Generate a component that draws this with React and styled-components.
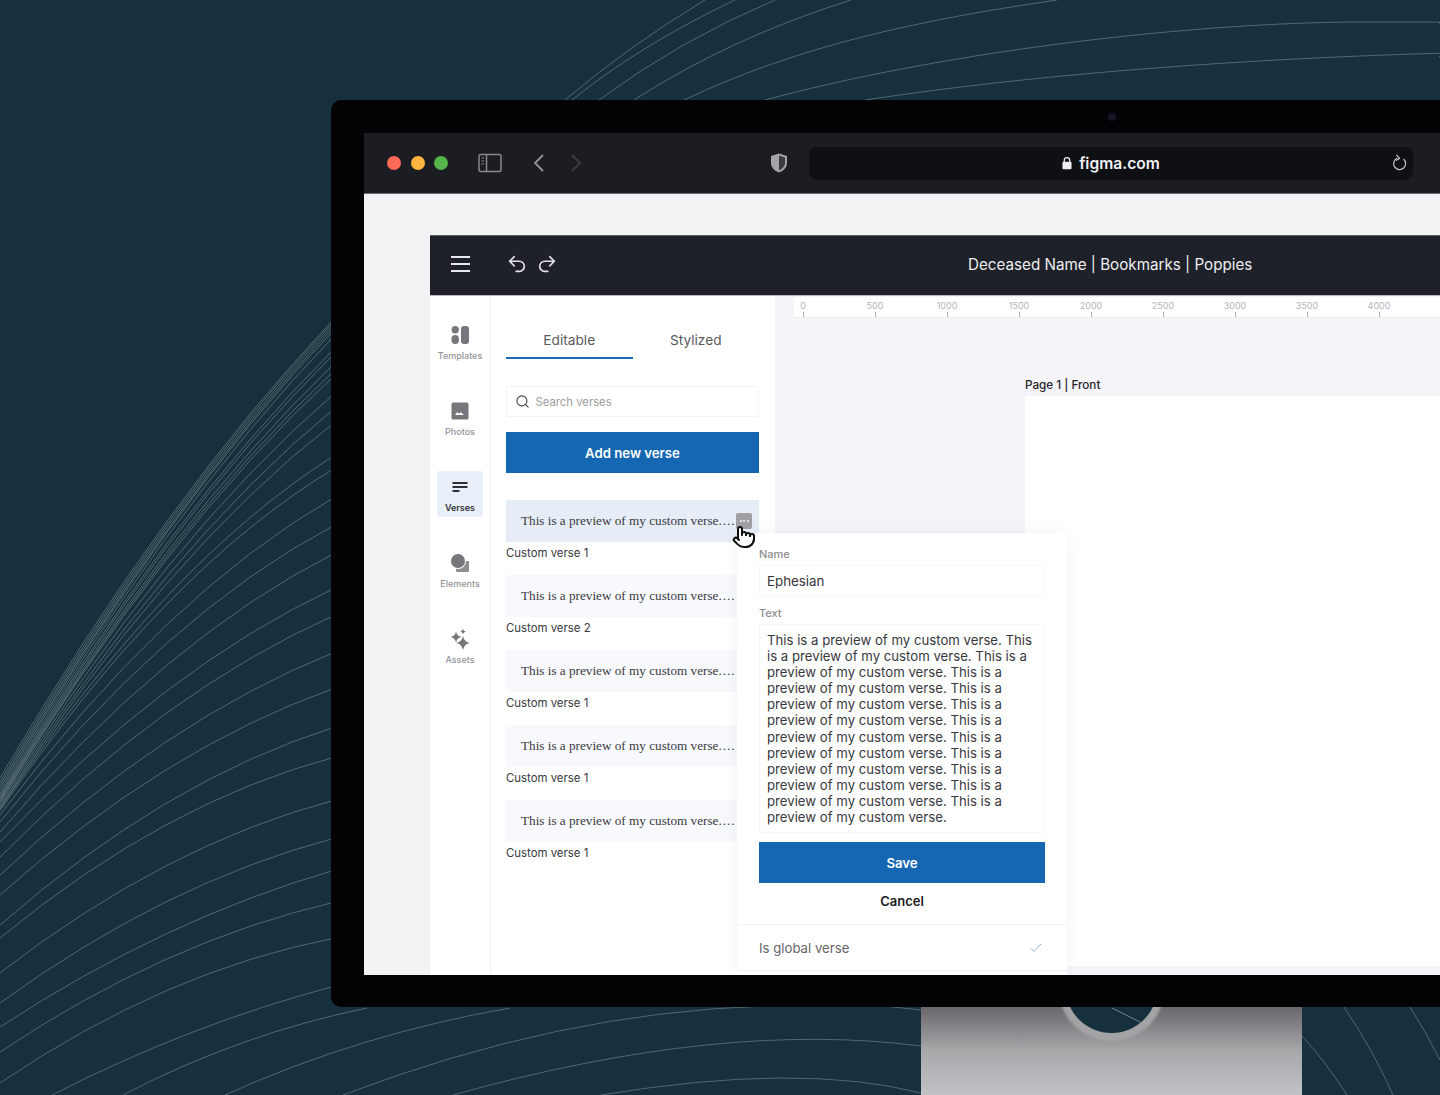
import React from "react";
import styled, { createGlobalStyle } from "styled-components";
import { Search, Undo2, Redo2 } from "lucide-react";

const Global = createGlobalStyle`
  html, body { margin: 0; padding: 0; background: #16303d; }
  * { box-sizing: border-box; }
  body { font-family: Inter, "Liberation Sans", sans-serif; }
`;

const Page = styled.div`
  position: relative;
  width: 1440px;
  height: 1095px;
  overflow: hidden;
  background: #16303d;
  padding: 100px 0 0 331px;
  display: flex;
  flex-direction: column;
`;
const Backdrop = styled.svg`
  position: absolute;
  inset: 0;
  width: 1440px;
  height: 1095px;
`;
const Monitor = styled.div`
  position: relative;
  height: 907px;
  flex: none;
  background: #030205;
  border-radius: 10px 0 0 10px;
  padding: 0 0 32px 33px;
  display: flex;
  flex-direction: column;
`;
const Bezel = styled.div`
  height: 33px;
  flex: none;
  display: flex;
  align-items: center;
  padding-left: 744px;
`;
const Camera = styled.span`
  width: 8px;
  height: 8px;
  border-radius: 50%;
  background: #14142a;
`;
const Screen = styled.div`
  flex: 1;
  display: flex;
  flex-direction: column;
  background: #f3f2f5;
  overflow: hidden;
`;
const BrowserBar = styled.div`
  height: 61px;
  flex: none;
  background: #1c1d22;
  display: flex;
  align-items: center;
  padding-left: 23px;
  border-bottom: 1px solid #6d6d72;
`;
const Lights = styled.div`
  display: flex;
  gap: 9.5px;
`;
const Light = styled.span`
  width: 14px;
  height: 14px;
  border-radius: 50%;
  background: ${(p) => p.$c};
`;
const BarIcon = styled.svg`
  flex: none;
  margin-left: ${(p) => p.$ml}px;
`;
const UrlBar = styled.div`
  margin-left: 21px;
  width: 604px;
  height: 33px;
  flex: none;
  background: #0f1014;
  border-radius: 8px;
  display: grid;
  grid-template-columns: 1fr auto 1fr;
  align-items: center;
`;
const UrlCenter = styled.div`
  grid-column: 2;
  display: flex;
  align-items: center;
  gap: 7px;
  color: #f2f2f4;
  font-size: 15.6px;
  font-weight: 600;
`;
const Reload = styled.svg`
  justify-self: end;
  margin-right: 6px;
`;
const Workspace = styled.div`
  flex: 1;
  min-height: 0;
  padding: 41px 0 0 66px;
  display: flex;
`;
const AppFrame = styled.div`
  position: relative;
  flex: 1;
  display: flex;
  flex-direction: column;
  min-width: 0;
`;
const AppHeader = styled.header`
  height: 61px;
  flex: none;
  background: #1e2129;
  border-top: 1px solid #5c5e63;
  border-bottom: 1px solid #b9b9bd;
  padding-bottom: 3px;
  display: flex;
  align-items: center;
  color: #eeeef0;
`;
const Burger = styled.div`
  width: 19px;
  margin-left: 21px;
  display: flex;
  flex-direction: column;
  gap: 5px;
`;
const BurgerBar = styled.span`
  height: 2px;
  background: #e9e9eb;
`;
const HistoryButtons = styled.div`
  margin-left: 36px;
  display: flex;
  gap: 8px;
  color: #e4e4e6;
`;
const Title = styled.div`
  margin-left: 410px;
  font-size: 15.2px;
  white-space: nowrap;
`;
const AppBody = styled.div`
  flex: 1;
  min-height: 0;
  display: flex;
  background: #fff;
`;
const Sidebar = styled.nav`
  width: 61px;
  flex: none;
  background: #fff;
  border-right: 1px solid #f1f1f4;
  padding: 23px 0 0 7px;
  display: flex;
  flex-direction: column;
  gap: 30px;
`;
const SideItem = styled.div`
  width: 46px;
  height: 46px;
  flex: none;
  padding-top: 7px;
  display: flex;
  flex-direction: column;
  align-items: center;
  gap: 6px;
  border-radius: 2px;
  background: ${(p) => (p.$active ? "#e9eff8" : "transparent")};
`;
const SideLabel = styled.span`
  font-size: 9px;
  line-height: 12px;
  white-space: nowrap;
  font-weight: ${(p) => (p.$active ? 600 : 500)};
  color: ${(p) => (p.$active ? "#333338" : "#939397")};
`;
const Panel = styled.section`
  width: 284px;
  flex: none;
  background: #fff;
  padding: 23px 16px 0 15px;
  display: flex;
  flex-direction: column;
`;
const Tabs = styled.div`
  display: flex;
  height: 40px;
  flex: none;
`;
const Tab = styled.div`
  width: 126.5px;
  height: 40px;
  display: flex;
  align-items: center;
  justify-content: center;
  padding-top: 4px;
  font-size: 13.7px;
  color: #5b5b60;
  border-bottom: 2px solid ${(p) => (p.$active ? "#1d69b3" : "transparent")};
`;
const SearchBox = styled.div`
  margin-top: 27px;
  height: 31px;
  flex: none;
  border: 1px solid #f4f4f7;
  border-radius: 2px;
  display: flex;
  align-items: center;
  gap: 6px;
  padding-left: 7.5px;
  color: #46464b;
  font-size: 11.3px;
`;
const Placeholder = styled.span`
  color: #9c9ca1;
`;
const PrimaryButton = styled.div`
  height: 41px;
  flex: none;
  background: #1567b1;
  color: #fff;
  display: flex;
  align-items: center;
  justify-content: center;
  font-size: 13.2px;
  font-weight: 600;
`;
const AddButton = styled(PrimaryButton)`
  margin-top: 15px;
`;
const VerseList = styled.div`
  margin-top: 27px;
  display: flex;
  flex-direction: column;
`;
const VerseGroup = styled.div`
  height: 75px;
  flex: none;
`;
const VerseCard = styled.div`
  position: relative;
  height: 42px;
  background: ${(p) => (p.$active ? "#e6edf7" : "#f8f9fc")};
  padding-left: 15px;
  display: flex;
  align-items: center;
`;
const VerseText = styled.span`
  font-family: "Liberation Serif", "Times New Roman", serif;
  font-size: 13.2px;
  color: #3a3a3f;
  white-space: nowrap;
`;
const VerseDots = styled.span`
  letter-spacing: 1px;
`;
const VerseName = styled.div`
  margin-top: 3.5px;
  font-size: 11.4px;
  line-height: 15px;
  color: #38383d;
`;
const MoreButton = styled.span`
  position: absolute;
  left: 230px;
  top: 13px;
  width: 16px;
  height: 16px;
  border-radius: 2px;
  background: #a1a1a5;
  color: #f2f2f2;
  display: flex;
  align-items: center;
  justify-content: center;
  gap: 1.5px;
`;
const MoreDot = styled.i`
  width: 2px;
  height: 2px;
  background: #f2f2f2;
  border-radius: 50%;
`;
const HandCursor = styled.svg`
  position: absolute;
  left: 226px;
  top: 25px;
  z-index: 3;
`;
const Canvas = styled.main`
  flex: 1;
  min-width: 0;
  background: #f4f4f9;
  display: flex;
  flex-direction: column;
  overflow: hidden;
`;
const Ruler = styled.div`
  margin: 1px 0 0 19px;
  height: 21px;
  flex: none;
  background: #fff;
  border-bottom: 1px solid #e9e9ee;
  overflow: hidden;
  display: flex;
`;
const RulerInner = styled.div`
  margin-left: -27px;
  display: flex;
  flex: none;
`;
const RulerCell = styled.div`
  width: 72px;
  flex: none;
  display: flex;
  flex-direction: column;
  align-items: center;
  font-size: 9px;
  line-height: 13px;
  color: #b2b2b6;
  padding-top: 2px;
`;
const RulerTick = styled.span`
  width: 1px;
  height: 5px;
  background: #a9a9ae;
`;
const PageLabel = styled.div`
  margin: 60px 0 0 250px;
  height: 14px;
  line-height: 14px;
  font-size: 11.7px;
  font-weight: 500;
  color: #26262a;
  white-space: nowrap;
`;
const PageSheet = styled.div`
  margin: 4px 0 9px 250px;
  flex: 1;
  background: #fff;
`;
const Popover = styled.aside`
  position: absolute;
  left: 307px;
  top: 298px;
  bottom: 0;
  width: 330px;
  z-index: 2;
  background: #fff;
  box-shadow: 0 0 18px rgba(40, 40, 90, 0.05);
  display: flex;
  flex-direction: column;
`;
const PopoverForm = styled.div`
  padding: 14px 22px 0 22px;
  display: flex;
  flex-direction: column;
`;
const FieldLabel = styled.label`
  font-size: 11px;
  line-height: 14px;
  font-weight: 500;
  color: #8c8c91;
`;
const NameInput = styled.div`
  margin-top: 4px;
  height: 31px;
  border: 1px solid #f6f6f8;
  border-radius: 2px;
  padding-left: 7px;
  display: flex;
  align-items: center;
  font-size: 13.3px;
  color: #333338;
`;
const TextLabel = styled(FieldLabel)`
  margin-top: 10px;
`;
const TextField = styled.div`
  margin-top: 4px;
  height: 209px;
  border: 1px solid #f6f6f8;
  border-radius: 2px;
  padding: 7px 7px 0 7px;
  font-size: 13.2px;
  line-height: 16.1px;
  color: #38383d;
`;
const SaveButton = styled(PrimaryButton)`
  margin-top: 9px;
`;
const CancelLine = styled.div`
  height: 36px;
  display: flex;
  align-items: center;
  justify-content: center;
  font-size: 13px;
  font-weight: 600;
  color: #1c1c20;
`;
const GlobalRow = styled.div`
  margin-top: 5px;
  height: 47px;
  border-top: 1px solid #f4f4f7;
  border-bottom: 1px solid #f4f4f7;
  padding: 0 25px 0 22px;
  display: flex;
  align-items: center;
  justify-content: space-between;
  font-size: 13.2px;
  color: #66666b;
`;
const Stand = styled.div`
  position: relative;
  margin-left: 590px;
  width: 381px;
  height: 88px;
  flex: none;
  overflow: hidden;
  background: linear-gradient(#69676b, #a8a7aa 50%, #c2c1c6 100%);
`;
const StandSvg = styled.svg`
  position: absolute;
  inset: 0;
`;

const fan = [
  [778, 323, 27], [782, 325, 27], [785, 328, 27], [788, 331, 27], [791, 334, 28], [794, 340, 28],
  [796, 353, 29], [798, 358, 29], [799, 368, 29], [801, 375, 30], [802, 380, 30],
  [804, 398, 31], [806, 413, 31], [808, 427, 32], [809, 460, 36], [811, 473, 36],
  [815, 502, 32], [822, 530, 31], [832, 558, 28], [842, 593, 25], [857, 620, 24],
  [875, 657, 23], [895, 693, 23], [925, 732, 24], [938, 762, 24], [973, 805, 22],
  [1003, 843, 20], [1027, 875, 16], [1052, 907, 19], [1083, 943, 21],
];
const extraPaths = [
  "M52 1095Q191 1024 335 986",
  "M123 1095Q240 1034 367 1008",
  "M225 1095Q360 1034 510 1008",
  "M343 1095Q560 1012 767 1006Q850 1000 921 1010",
  "M453 1095Q720 1020 921 1046",
  "M601 1095Q800 1062 921 1093",
  "M1302 1036Q1326 1062 1347 1095",
  "M1344 1007Q1372 1048 1393 1095",
  "M1410 1007Q1426 1032 1440 1060",
  "M565 100Q630 45 705 0",
  "M572 100Q640 45 735 0",
  "M599 100Q680 40 775 0",
  "M634 100Q730 38 851 0",
  "M684 100C800 45 920 20 1057 0",
  "M765 100C950 50 1200 22 1363 22S1430 23 1440 23",
  "M865 100C1050 72 1250 60 1386 55S1430 56 1440 57",
];

const CURVES = fan.map(([a, b, bulge]) => `M0 ${a}Q165 ${(a + b) / 2 - 2 * bulge} 335 ${b - 5}`);

const sideIconColor = "#77777b";

const TemplatesIcon = () => (
  <svg width="18" height="18" viewBox="0 0 18 18" fill={sideIconColor}>
    <circle cx="4.2" cy="3.8" r="3.7" />
    <rect x="0.5" y="9" width="7.4" height="9" rx="3.7" />
    <rect x="10" y="0" width="8" height="18" rx="3" />
  </svg>
);
const PhotosIcon = () => (
  <svg width="18" height="18" viewBox="0 0 18 18">
    <rect x="0.5" y="0.5" width="17" height="17" rx="1.5" fill={sideIconColor} />
    <path d="M4 13l2.4-3 1.8 2 1.4-2 3.4 3z" fill="#fff" />
  </svg>
);
const VersesIcon = () => (
  <svg width="18" height="18" viewBox="0 0 18 18" fill="#2d2d33">
    <rect x="1.5" y="4" width="15" height="2" />
    <rect x="1.5" y="8" width="15" height="2" />
    <rect x="1.5" y="12" width="7" height="2" />
  </svg>
);
const ElementsIcon = () => (
  <svg width="20" height="18" viewBox="0 0 20 18">
    <rect x="6" y="7" width="13" height="11" rx="1" fill="#8e8e92" />
    <circle cx="8" cy="7" r="8" fill="#fff" />
    <circle cx="8" cy="7" r="7" fill={sideIconColor} />
  </svg>
);
const star = (cx, cy, r) => {
  const k = r * 0.16;
  return `M${cx} ${cy - r}Q${cx + k} ${cy - k} ${cx + r} ${cy}Q${cx + k} ${cy + k} ${cx} ${cy + r}Q${cx - k} ${cy + k} ${cx - r} ${cy}Q${cx - k} ${cy - k} ${cx} ${cy - r}z`;
};
const AssetsIcon = () => (
  <svg width="20" height="18" viewBox="0 0 20 18" fill={sideIconColor} overflow="visible">
    <path d={star(13, 13, 7)} />
    <path d={star(6, 7, 5.5)} />
    <path d={star(13, 1.5, 2.8)} />
  </svg>
);

const sideItems = [
  { label: "Templates", Icon: TemplatesIcon },
  { label: "Photos", Icon: PhotosIcon },
  { label: "Verses", Icon: VersesIcon, active: true },
  { label: "Elements", Icon: ElementsIcon },
  { label: "Assets", Icon: AssetsIcon },
];
const verses = ["Custom verse 1", "Custom verse 2", "Custom verse 1", "Custom verse 1", "Custom verse 1"];
const rulerMarks = [0, 500, 1000, 1500, 2000, 2500, 3000, 3500, 4000];
const verseBody =
  "This is a preview of my custom verse. ".repeat(11) + "This is a preview of my custom verse.";

export default function App() {
  return (
    <Page>
      <Global />
      <Backdrop viewBox="0 0 1440 1095" fill="none" stroke="#b4c4c4" strokeOpacity="0.5" strokeWidth="0.75">
        {CURVES.map((d, i) => (
          <path key={i} d={d} />
        ))}
        {extraPaths.map((d) => (
          <path key={d} d={d} />
        ))}
      </Backdrop>
      <Monitor>
        <Bezel>
          <Camera />
        </Bezel>
        <Screen>
          <BrowserBar>
            <Lights>
              <Light $c="#ff6a56" />
              <Light $c="#ffb440" />
              <Light $c="#56b54a" />
            </Lights>
            <BarIcon $ml={30} width="24" height="20" viewBox="0 0 24 20" fill="none" stroke="#88888c" strokeWidth="1.5">
              <rect x="1" y="1.5" width="22" height="17" rx="2" />
              <path d="M8.5 1.5v17" />
              <path d="M3.5 5h2.5M3.5 8h2.5M3.5 11h2.5" strokeWidth="1" />
            </BarIcon>
            <BarIcon $ml={31} width="12" height="20" viewBox="0 0 12 20" fill="none" stroke="#96969a" strokeWidth="1.8">
              <path d="M10 2 2 10l8 8" />
            </BarIcon>
            <BarIcon $ml={25} width="12" height="20" viewBox="0 0 12 20" fill="none" stroke="#3d3e42" strokeWidth="1.8">
              <path d="M2 2l8 8-8 8" />
            </BarIcon>
            <BarIcon $ml={188} width="18" height="20" viewBox="0 0 18 20">
              <path d="M9 .5l8 2.5v7c0 4.5-3.5 7.800-8 9.500-4.500-1.700-8-5-8-9.500V3z" fill="#a4a4a8" />
              <path d="M9 2.500l6 1.900v5.600c0 3.300-2.500 5.800-6 7.300z" fill="#3a3b3f" />
            </BarIcon>
            <UrlBar>
              <UrlCenter>
                <svg width="10" height="14" viewBox="0 0 11 14" fill="#eeeef0">
                  <path d="M2.500 6V4a3 3 0 0 1 6 0v2" fill="none" stroke="#eeeef0" strokeWidth="1.4" />
                  <rect x="0.5" y="5.5" width="10" height="8.5" rx="1.2" />
                </svg>
                figma.com
              </UrlCenter>
              <Reload width="16" height="18" viewBox="0 0 16 18" fill="none" stroke="#c9c9cc" strokeWidth="1.2">
                <path d="M6 4.200a6 6 0 1 0 6.500.8" />
                <path d="M5.500 1l3 3.300-3.300 2.200" />
              </Reload>
            </UrlBar>
          </BrowserBar>
          <Workspace>
            <AppFrame>
              <AppHeader>
                <Burger>
                  <BurgerBar />
                  <BurgerBar />
                  <BurgerBar />
                </Burger>
                <HistoryButtons>
                  <Undo2 size={22} strokeWidth={1.8} />
                  <Redo2 size={22} strokeWidth={1.8} />
                </HistoryButtons>
                <Title>Deceased Name | Bookmarks | Poppies</Title>
              </AppHeader>
              <AppBody>
                <Sidebar>
                  {sideItems.map(({ label, Icon, active }) => (
                    <SideItem key={label} $active={active}>
                      <Icon />
                      <SideLabel $active={active}>{label}</SideLabel>
                    </SideItem>
                  ))}
                </Sidebar>
                <Panel>
                  <Tabs>
                    <Tab $active>Editable</Tab>
                    <Tab>Stylized</Tab>
                  </Tabs>
                  <SearchBox>
                    <Search size={15} strokeWidth={1.8} />
                    <Placeholder>Search verses</Placeholder>
                  </SearchBox>
                  <AddButton>Add new verse</AddButton>
                  <VerseList>
                    {verses.map((name, i) => (
                      <VerseGroup key={i}>
                        <VerseCard $active={i === 0}>
                          <VerseText>
                            This is a preview of my custom verse<VerseDots>....</VerseDots>
                          </VerseText>
                          {i === 0 && (
                            <>
                              <MoreButton>
                                <MoreDot />
                                <MoreDot />
                                <MoreDot />
                              </MoreButton>
                              <HandCursor width="24" height="24" viewBox="0 0 24 24" fill="none" stroke="#111" strokeWidth="2" strokeLinecap="round" strokeLinejoin="round">
                                <path fill="#fff" stroke="none" d="M6 14V4a2 2 0 0 1 4 0v3a2 2 0 0 1 4 1 2 2 0 0 1 4 2 2 2 0 0 1 4 1v3a8 8 0 0 1-8 8h-2c-2.800 0-4.500-.9-6-2.300l-3.600-3.600a2 2 0 0 1 2.800-2.800z" />
                                <path d="M22 14a8 8 0 0 1-8 8" />
                                <path d="M18 11v-1a2 2 0 0 0-2-2a2 2 0 0 0-2 2" />
                                <path d="M14 10V9a2 2 0 0 0-2-2a2 2 0 0 0-2 2v1" />
                                <path d="M10 9.500V4a2 2 0 0 0-2-2a2 2 0 0 0-2 2v10" />
                                <path d="M18 11a2 2 0 1 1 4 0v3a8 8 0 0 1-8 8h-2c-2.800 0-4.500-.86-5.990-2.340l-3.600-3.600a2 2 0 0 1 2.830-2.820L7 15" />
                              </HandCursor>
                            </>
                          )}
                        </VerseCard>
                        <VerseName>{name}</VerseName>
                      </VerseGroup>
                    ))}
                  </VerseList>
                </Panel>
                <Canvas>
                  <Ruler>
                    <RulerInner>
                      {rulerMarks.map((m) => (
                        <RulerCell key={m}>
                          {m}
                          <RulerTick />
                        </RulerCell>
                      ))}
                    </RulerInner>
                  </Ruler>
                  <PageLabel>Page 1 | Front</PageLabel>
                  <PageSheet />
                </Canvas>
              </AppBody>
              <Popover>
                <PopoverForm>
                  <FieldLabel>Name</FieldLabel>
                  <NameInput>Ephesian</NameInput>
                  <TextLabel>Text</TextLabel>
                  <TextField>{verseBody}</TextField>
                  <SaveButton>Save</SaveButton>
                  <CancelLine>Cancel</CancelLine>
                </PopoverForm>
                <GlobalRow>
                  Is global verse
                  <svg width="12" height="10" viewBox="0 0 12 10" fill="none" stroke="#8fb2d8" strokeWidth="1">
                    <path d="M1 5.500l3 3 7-7.500" />
                  </svg>
                </GlobalRow>
              </Popover>
            </AppFrame>
          </Workspace>
        </Screen>
      </Monitor>
      <Stand>
        <StandSvg width="381" height="88" viewBox="0 0 381 88">
          <circle cx="190.5" cy="-19" r="53" fill="#a3a3a5" style={{ filter: "blur(0.8px)" }} />
          <circle cx="190.5" cy="-20" r="46" fill="#16303d" />
          <path d="M191 1l30 15" fill="none" stroke="#8aa0a3" strokeWidth="0.8" />
        </StandSvg>
      </Stand>
    </Page>
  );
}
